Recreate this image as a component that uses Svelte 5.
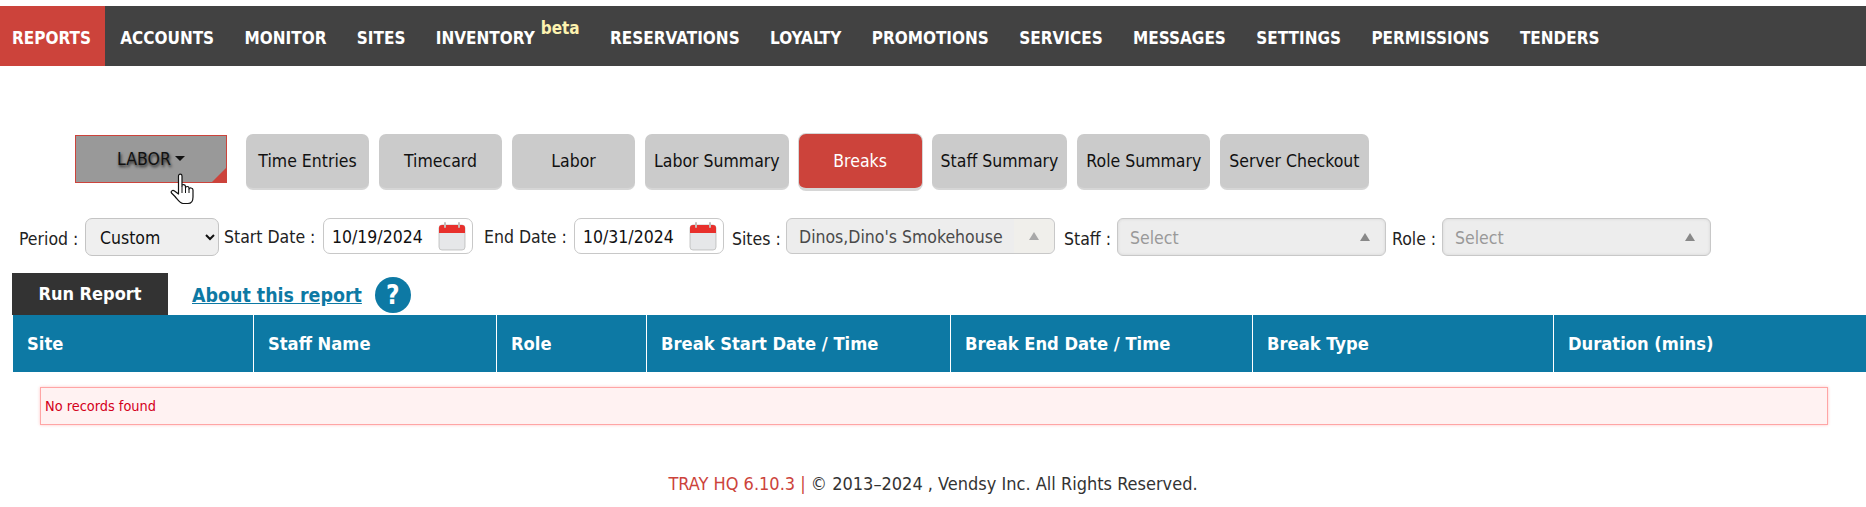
<script>
  const navItems = ['ACCOUNTS', 'MONITOR', 'SITES', 'INVENTORY', 'RESERVATIONS', 'LOYALTY', 'PROMOTIONS', 'SERVICES', 'MESSAGES', 'SETTINGS', 'PERMISSIONS', 'TENDERS'];
  const tabs = ['Time Entries', 'Timecard', 'Labor', 'Labor Summary', 'Breaks', 'Staff Summary', 'Role Summary', 'Server Checkout'];
  const columns = [
    { label: 'Site', width: 240 },
    { label: 'Staff Name', width: 243 },
    { label: 'Role', width: 150 },
    { label: 'Break Start Date / Time', width: 304 },
    { label: 'Break End Date / Time', width: 302 },
    { label: 'Break Type', width: 301 },
    { label: 'Duration (mins)', width: 304 },
  ];
</script>

{#snippet calendar()}
  <svg class="cal" width="28" height="29" viewBox="0 0 28 29">
    <rect x="1" y="3" width="26" height="25" rx="3" fill="#dcdee0" stroke="#c9c9c9" />
    <rect x="2" y="11" width="24" height="16" rx="1" fill="#e6e7e9" />
    <path d="M1 11V6a3 3 0 0 1 3-3h20a3 3 0 0 1 3 3v5z" fill="#e8302c" />
    <rect x="6" y="0" width="2" height="6" rx="1" fill="#c4bcb8" />
    <rect x="20" y="0" width="2" height="6" rx="1" fill="#c4bcb8" />
  </svg>
{/snippet}

<div class="page">
  <nav class="nav">
    <a class="nav-item active" href="#reports">REPORTS</a>
    {#each navItems as item}
      <a class="nav-item" href="#{item.toLowerCase()}">
        {item}{#if item === 'INVENTORY'}<sup class="beta">beta</sup>{/if}
      </a>
    {/each}
  </nav>

  <div class="tabs">
    <button class="dropdown">
      <span class="dropdown-label">LABOR</span>
      <span class="caret"></span>
      <span class="corner"></span>
      <svg class="hand" width="26" height="32" viewBox="0 0 26 32">
        <path d="M8.5 3C8.5.5 12 .5 12 3V13C12 11 15.5 11 15.5 13.5V15C15.5 13 19 13 19 15V16C19 14.5 23 14.5 23 17V24C23 28 21 30.5 18 30.5H13C10 30.5 8 27 5 23.5L1.5 20C.5 18.5 2.5 16.5 4.5 18L8.5 21Z" fill="#fff" stroke="#111" stroke-width="1.2" stroke-linejoin="round" />
        <path d="M12 13V20M15.5 15V20M19 16V20" fill="none" stroke="#111" stroke-width="1" />
      </svg>
    </button>
    {#each tabs as tab}
      <button class="tab" class:current={tab === 'Breaks'}>{tab}</button>
    {/each}
  </div>

  <div class="filters">
    <span class="label low">Period :</span>
    <select class="period"><option>Custom</option></select>
    <span class="label start">Start Date :</span>
    <div class="date"><span>10/19/2024</span>{@render calendar()}</div>
    <span class="label end">End Date :</span>
    <div class="date"><span>10/31/2024</span>{@render calendar()}</div>
    <span class="label low sites">Sites :</span>
    <div class="multi short">
      <span class="value">Dinos,Dino's Smokehouse</span>
      <span class="arrow-box"><span class="arrow"></span></span>
    </div>
    <span class="label low staff">Staff :</span>
    <div class="multi empty"><span class="value">Select</span><span class="arrow-box"><span class="arrow"></span></span></div>
    <span class="label low role">Role :</span>
    <div class="multi empty"><span class="value">Select</span><span class="arrow-box"><span class="arrow"></span></span></div>
  </div>

  <div class="actions">
    <button class="run">Run Report</button>
    <a class="about" href="#about">About this report</a>
    <span class="help">?</span>
  </div>

  <div class="thead">
    {#each columns as col}
      <div class="th" style="width: {col.width}px">{col.label}</div>
    {/each}
  </div>

  <div class="alert">No records found</div>

  <footer class="footer">
    <span class="version">TRAY HQ 6.10.3 |</span> © 2013–2024 , Vendsy Inc. All Rights Reserved.
  </footer>
</div>

<style>
  :global(body) {
    margin: 0;
    background: #fff;
  }

  .page {
    font-family: 'DejaVu Sans', sans-serif;
    font-stretch: condensed;
    font-size: 17.5px;
    color: #222;
    padding-top: 6px;
    height: 501px;
    overflow: hidden;
  }

  .nav {
    display: flex;
    height: 60px;
    background: #424242;
  }

  .nav-item {
    display: flex;
    align-items: center;
    padding: 3px 15.2px 0;
    color: #fff;
    font-weight: 700;
    font-size: 17px;
    text-decoration: none;
    white-space: nowrap;
  }

  .nav-item.active {
    width: 105px;
    box-sizing: border-box;
    padding: 3px 0 0 12px;
    background: #cc433b;
  }

  .beta {
    align-self: flex-start;
    margin: 9px 0 0 6px;
    color: #fdf3b0;
    font-size: 17px;
    font-weight: 700;
    line-height: 20px;
  }

  .tabs {
    display: flex;
    gap: 10px;
    margin-top: 68px;
    padding-left: 75px;
    align-items: flex-start;
  }

  .tabs button {
    font-family: inherit;
    font-stretch: condensed;
    font-size: 17.5px;
    cursor: pointer;
  }

  .dropdown {
    position: relative;
    width: 152px;
    height: 48px;
    margin: 1px 9px 0 0;
    padding: 0;
    background: #999;
    border: 1px solid #cc433b;
    color: #111;
    display: flex;
    align-items: center;
    justify-content: center;
    gap: 4px;
  }

  .dropdown-label {
    text-shadow: 1px 2px 3px #222;
  }

  .caret {
    border: 5px solid transparent;
    border-top-color: #111;
    border-bottom: 0;
    margin-top: -2px;
  }

  .corner {
    position: absolute;
    right: -1px;
    bottom: -1px;
    border-style: solid;
    border-width: 0 0 16px 16px;
    border-color: transparent transparent #cc433b transparent;
  }

  .hand {
    position: absolute;
    left: 94px;
    top: 37px;
  }

  .tab {
    min-width: 123px;
    height: 56px;
    padding: 0 9px;
    box-sizing: border-box;
    background: #cbcbcb;
    border: 0;
    border-bottom: 2px solid #d6d6d6;
    border-radius: 7px;
    color: #111;
    white-space: nowrap;
  }

  .tab.current {
    background: #cc433b;
    color: #fff;
    box-shadow: 0 0 0 1px #d6d6d6;
  }

  .filters {
    display: grid;
    grid-template-columns: 66px 134px 104px 150px 101px 150px 62px 269px 62px 269px 56px 269px;
    align-items: start;
    margin-top: 28px;
    padding-left: 19px;
  }

  .label {
    height: 38px;
    line-height: 38px;
    white-space: nowrap;
  }

  .label.low {
    line-height: 42px;
  }

  .start {
    padding-left: 5px;
  }

  .end {
    padding-left: 11px;
  }

  .sites {
    padding-left: 8px;
  }

  .staff {
    padding-left: 9px;
  }

  .role {
    padding-left: 6px;
  }

  .period {
    height: 38px;
    padding: 1px 4px 0 10px;
    font: inherit;
    font-stretch: condensed;
    color: #111;
    background-color: #efefef;
    border: 1px solid #c4c4c4;
    border-radius: 7px;
  }

  .date {
    display: flex;
    align-items: center;
    justify-content: space-between;
    box-sizing: border-box;
    height: 36px;
    padding: 0 6px 0 8px;
    border: 1px solid #c8c8c8;
    border-radius: 7px;
    color: #111;
  }

  .date span {
    padding-top: 1px;
  }

  .multi {
    display: flex;
    align-items: center;
    justify-content: space-between;
    box-sizing: border-box;
    height: 38px;
    padding-left: 12px;
    background: #ededed;
    border: 1px solid #c8c8c8;
    border-radius: 6px;
    box-shadow: inset 0 0 3px #d4d4d4;
    color: #999;
  }

  .value {
    padding-top: 2px;
  }

  .multi.short {
    height: 36px;
    color: #4a4a4a;
    box-shadow: none;
  }

  .arrow-box {
    display: flex;
    align-items: center;
    justify-content: center;
    width: 40px;
    height: 100%;
  }

  .short .arrow-box {
    background: #f0efeb;
    border-radius: 0 6px 6px 0;
  }

  .arrow {
    border: 5px solid transparent;
    border-bottom: 8px solid #a8a8a8;
    border-top: 0;
  }

  .empty .arrow {
    border-bottom-color: #888;
  }

  .actions {
    display: flex;
    align-items: center;
    margin-top: 16px;
    padding-left: 12px;
    height: 43px;
  }

  .run {
    width: 156px;
    height: 42px;
    background: #333;
    border: 0;
    color: #fff;
    font-family: inherit;
    font-stretch: condensed;
    font-weight: 700;
    font-size: 18px;
  }

  .about {
    margin: 3px 0 0 24px;
    color: #0d79a4;
    font-weight: 700;
    font-size: 19.4px;
  }

  .help {
    width: 36px;
    height: 36px;
    margin: 2px 0 0 13px;
    border-radius: 50%;
    background: #0d79a4;
    color: #fff;
    font-weight: 700;
    font-size: 26px;
    line-height: 36px;
    text-align: center;
  }

  .thead {
    display: flex;
    margin-left: 13px;
    height: 57px;
    background: #0d79a4;
  }

  .th {
    display: flex;
    align-items: center;
    box-sizing: border-box;
    padding-left: 14px;
    border-left: 1px solid #fff;
    color: #fff;
    font-weight: 700;
    font-size: 18.2px;
  }

  .th:first-child {
    border-left: 0;
  }

  .alert {
    display: flex;
    align-items: center;
    box-sizing: border-box;
    height: 38px;
    margin: 15px 38px 0 40px;
    padding-left: 4px;
    background: #fff2f2;
    border: 1px solid #ffa5a5;
    box-shadow: 0 0 3px #ffc4c4;
    color: #d4001a;
    font-size: 14.4px;
  }

  .footer {
    margin-top: 48px;
    text-align: center;
    color: #333;
    font-size: 18px;
  }

  .version {
    color: #cc433b;
  }
</style>
